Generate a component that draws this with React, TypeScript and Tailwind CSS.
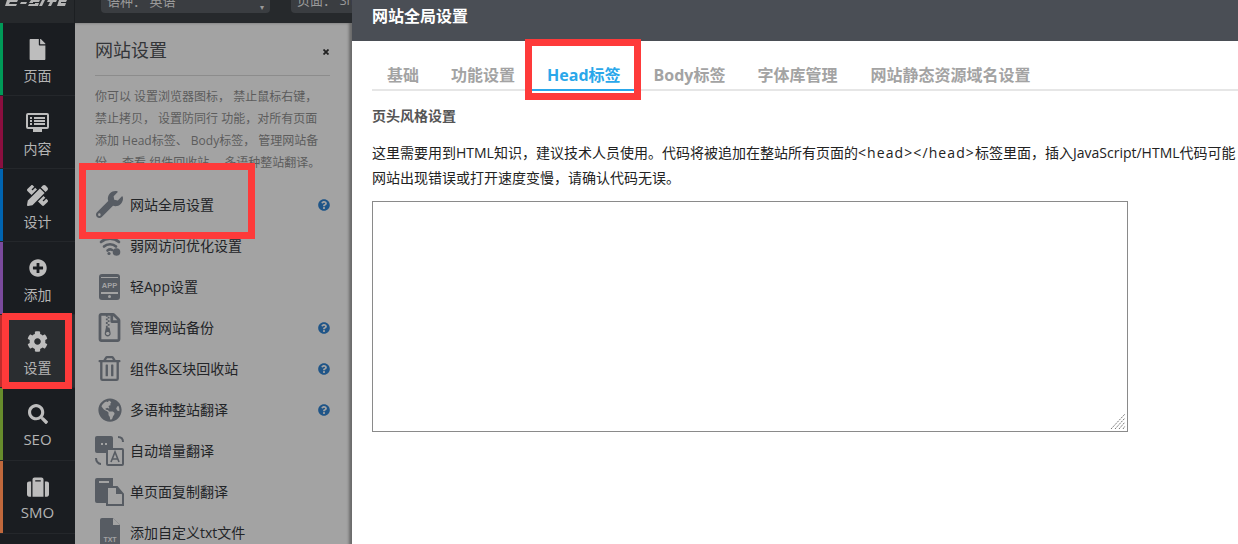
import React from 'react';
import { FaFile, FaPlusCircle, FaCog, FaSearch, FaSuitcase, FaWrench, FaQuestionCircle, FaRegTrashAlt, FaGlobeAmericas, FaRegFileArchive, FaPencilRuler } from 'react-icons/fa';

const cjk = { fontFamily: '"Open Sans", "Noto Sans CJK SC", "Noto Sans", sans-serif' };

const DesktopIcon = () => (
  <svg width="23" height="19" viewBox="0 0 23 19" fill="#bdbdbd">
    <path fillRule="evenodd" d="M2 0h19a2 2 0 0 1 2 2v12a2 2 0 0 1-2 2h-5v3H7v-3H2a2 2 0 0 1-2-2V2a2 2 0 0 1 2-2zm0 2v12h19V2H2z" />
    <path d="M4 4h2v2H4zM8 4h11v2H8zM4 7h2v2H4zM8 7h11v2H8zM4 10h2v2H4zM8 10h11v2H8z" />
  </svg>
);

const WifiIcon = () => (
  <svg width="22" height="20" viewBox="0 0 22 20" fill="none" stroke="#575c63" strokeWidth="2.6" strokeLinecap="round">
    <path d="M2 6c5-4.500 13-4.500 18 0M5 10.500c3-3 9-3 12 0M8.500 14.500c1.500-1.200 3.500-1.200 4.500-.5" />
    <circle cx="10" cy="17.500" r="1.600" fill="#575c63" stroke="none" />
    <circle cx="17.500" cy="16" r="3.800" fill="#575c63" stroke="none" />
  </svg>
);

const AppIcon = () => (
  <svg width="21" height="26" viewBox="0 0 21 26">
    <path d="M3 0h15a3 3 0 0 1 3 3v20a3 3 0 0 1-3 3H3a3 3 0 0 1-3-3V3a3 3 0 0 1 3-3z" fill="#575c63" />
    <rect x="2" y="3" width="17" height="1" fill="#a3a3a3" />
    <rect x="2" y="18" width="17" height="2" fill="#a3a3a3" />
    <circle cx="10.500" cy="22.500" r="1.500" fill="#a3a3a3" />
    <text x="10.500" y="14" fontSize="7.500" fontWeight="700" textAnchor="middle" fill="#a3a3a3" fontFamily="Liberation Sans">APP</text>
  </svg>
);

const TranslateIcon = () => (
  <svg width="29" height="30" viewBox="0 0 29 30">
    <path d="M2 0h14a2 2 0 0 1 2 2v13a2 2 0 0 1-2 2H2a2 2 0 0 1-2-2V2a2 2 0 0 1 2-2z" fill="#575c63" />
    <rect x="6" y="7" width="2" height="2" fill="#a3a3a3" />
    <rect x="10" y="7" width="2" height="2" fill="#a3a3a3" />
    <path d="M12 13h15a1 1 0 0 1 1 1v14a1 1 0 0 1-1 1H13a1 1 0 0 1-1-1z" fill="#a3a3a3" stroke="#575c63" strokeWidth="2" />
    <path d="M16 26l4-10 4 10M17.500 23h5" fill="none" stroke="#575c63" strokeWidth="1.600" />
    <path d="M23 1c3 0 5 2 5 5M1 22c0 3 2 6 5 6" fill="none" stroke="#575c63" strokeWidth="2" />
  </svg>
);

const CopyIcon = () => (
  <svg width="29" height="28" viewBox="0 0 29 28">
    <path d="M2 0h16v10h-6v15H2a2 2 0 0 1-2-2V2a2 2 0 0 1 2-2z" fill="#575c63" />
    <rect x="4" y="3" width="10" height="2" fill="#a3a3a3" />
    <path d="M12 9h10l6 7v11H12z" fill="#a3a3a3" stroke="#575c63" strokeWidth="2" />
    <path d="M21 9v7h7z" fill="#575c63" />
  </svg>
);

const TxtIcon = () => (
  <svg width="20" height="30" viewBox="0 0 20 30">
    <path d="M2 0h11l7 7v21a2 2 0 0 1-2 2H2a2 2 0 0 1-2-2V2a2 2 0 0 1 2-2z" fill="#575c63" />
    <path d="M13 0v7h7z" fill="#a3a3a3" />
    <text x="10" y="24" fontSize="7" fontWeight="700" textAnchor="middle" fill="#a3a3a3" fontFamily="Liberation Sans">TXT</text>
  </svg>
);

const railItems = [
  { label: '页面', stripe: 'bg-[#009a58]', icon: <FaFile size={21} color="#bdbdbd" /> },
  { label: '内容', stripe: 'bg-[#8a0f3f]', icon: <DesktopIcon /> },
  { label: '设计', stripe: 'bg-[#0064b0]', icon: <FaPencilRuler size={21} color="#bdbdbd" /> },
  { label: '添加', stripe: 'bg-[#7a4a9c]', icon: <FaPlusCircle size={18} color="#bdbdbd" /> },
  { label: '设置', stripe: 'bg-[#c02c2c]', icon: <FaCog size={21} color="#bdbdbd" />, active: true },
  { label: 'SEO', stripe: 'bg-[#678c2c]', icon: <FaSearch size={20} color="#bdbdbd" />, latin: true },
  { label: 'SMO', stripe: 'bg-[#c0683c]', icon: <FaSuitcase size={22} color="#bdbdbd" />, latin: true },
];

const menuItems = [
  { label: '网站全局设置', icon: <FaWrench size={27} color="#575c63" />, help: true },
  { label: '弱网访问优化设置', icon: <WifiIcon /> },
  { label: '轻App设置', icon: <AppIcon /> },
  { label: '管理网站备份', icon: <FaRegFileArchive size={29} color="#575c63" />, help: true },
  { label: '组件&区块回收站', icon: <FaRegTrashAlt size={25} color="#575c63" />, help: true },
  { label: '多语种整站翻译', icon: <FaGlobeAmericas size={24} color="#575c63" />, help: true },
  { label: '自动增量翻译', icon: <TranslateIcon /> },
  { label: '单页面复制翻译', icon: <CopyIcon /> },
  { label: '添加自定义txt文件', icon: <TxtIcon /> },
];

const tabs = [
  { label: '基础', cls: 'pl-[15px] pr-[16px]' },
  { label: '功能设置', cls: 'px-[16px]' },
  { label: 'Head标签', cls: 'ml-[1px] pl-[15px] pr-[16px] border-b-2 border-[#2aa7ea] !text-[#2aa7ea]' },
  { label: 'Body标签', cls: 'pl-[17px] pr-[16px]' },
  { label: '字体库管理', cls: 'px-[16px]' },
  { label: '网站静态资源域名设置', cls: 'pl-[17px] pr-[16px]' },
];

const RedBox = ({ className }: { className: string }) => (
  <div className={`absolute border-[7px] border-[#fe3a3a] z-20 ${className}`} />
);

export default function App() {
  return (
    <div className="relative flex h-[544px] w-[1238px] overflow-hidden bg-white" style={cjk}>
      {/* left rail */}
      <div className="flex w-[75px] shrink-0 flex-col bg-[#1a1d21]">
        <div className="flex h-[23px] shrink-0 items-start overflow-hidden border-r border-[#1c1f22] bg-[#26292c] pl-[5px]">
          <svg width="62" height="6" viewBox="0 0 62 6" fill="#b5b5b5">
            <path d="M2 0h11l-1 2H5L4 4h8l-1 2H0zM16 2h6l-1 2h-6zM26 0h9l-1 2h-6v1h6l-1 3h-10l1-2h6V3h-6zM37 0h3l-3 6h-3zM43 0h9l-1 2h-3l-2 4h-3l2-4h-3zM54 0h8l-1 2h-5v1h5l-1 3h-8z" />
          </svg>
        </div>
        {railItems.map((item) => (
          <div
            key={item.label}
            className={`flex h-[73px] shrink-0 border-b border-[#24272b] ${item.active ? 'bg-[#2a2d30]' : ''}`}
          >
            <div className={`w-[3px] ${item.stripe}`} />
            <div className="flex flex-1 flex-col items-center pr-[3px] pt-[14px]">
              <div className="flex h-[24px] items-center">{item.icon}</div>
              <span className={`mt-[5px] leading-[20px] text-[#b4b4b4] ${item.latin ? 'text-[15px] -translate-y-[2px]' : 'text-[14px]'}`}>{item.label}</span>
            </div>
          </div>
        ))}
      </div>

      {/* settings panel */}
      <div className="flex w-[277px] shrink-0 flex-col">
        <div className="flex h-[23px] shrink-0 items-start gap-[21px] overflow-hidden bg-[#26292c] pl-[26px]">
          <div className="flex h-[13px] w-[169px] shrink-0 items-center justify-between overflow-hidden rounded-b-[4px] bg-[#3a3d41] px-[6px] text-[13px] text-[#9a9a9a]">
            <span className="-mt-[9px] whitespace-nowrap">语种： 英语</span>
            <span className="text-[8px]">▾</span>
          </div>
          <div className="h-[13px] flex-1 overflow-hidden whitespace-nowrap rounded-bl-[4px] bg-[#3a3d41] pl-[6px] text-[13px] leading-[13px] text-[#9a9a9a]">
            <span className="relative -top-[6px]">页面： Shop</span>
          </div>
        </div>
        <div className="flex flex-1 flex-col bg-[#a3a3a3] pl-[20px] pr-[22px] shadow-[inset_-3px_0_3px_rgba(0,0,0,0.35)]">
          <div className="flex h-[53px] shrink-0 items-center justify-between border-b border-[#8c8c8c]">
            <span className="mt-[3px] text-[18px] text-[#333538]">网站设置</span>
            <svg className="mr-px mt-[6px]" width="6" height="6" viewBox="0 0 6 6" stroke="#222" strokeWidth="1.800">
              <path d="M0.500 0.500l5 5M5.500 0.500l-5 5" />
            </svg>
          </div>
          <p className="mt-[10px] shrink-0 whitespace-nowrap text-[12px] leading-[22px] text-[#5c5c5c]">
            你可以 设置浏览器图标， 禁止鼠标右键，
            <br />
            禁止拷贝， 设置防同行 功能，对所有页面
            <br />
            添加 Head标签、 Body标签， 管理网站备
            <br />
            份， 查看 组件回收站， 多语种整站翻译。
          </p>
          <div className="mt-[10px] flex flex-col">
            {menuItems.map((item) => (
              <div key={item.label} className="flex h-[41px] shrink-0 items-center">
                <div className="flex h-[30px] w-[35px] shrink-0 items-center justify-center pr-[6px]">{item.icon}</div>
                <span className="flex-1 text-[14px] text-[#222427]">{item.label}</span>
                {item.help && <FaQuestionCircle size={12} color="#1f5588" />}
              </div>
            ))}
          </div>
        </div>
      </div>

      {/* modal */}
      <div className="relative z-10 flex min-w-0 flex-1 flex-col bg-white">
        <div className="flex h-[41px] shrink-0 items-center bg-[#4a4e55] pb-[9px] pl-[20px]">
          <span className="text-[16px] font-bold text-white">网站全局设置</span>
        </div>
        <div className="ml-[20px] mt-[21px] flex h-[29px] w-[866px] shrink-0 items-start border-b-2 border-[#e6e6e6]">
          {tabs.map((tab) => (
            <div
              key={tab.label}
              className={`h-[29px] whitespace-nowrap text-[16px] font-bold leading-[26px] text-[#a3a3a3] ${tab.cls}`}
            >
              {tab.label}
            </div>
          ))}
        </div>
        <div className="ml-[20px] mt-[14px] text-[14px] font-bold leading-[22px] text-[#555]">页头风格设置</div>
        <p className="ml-[20px] mt-[13px] w-[866px] whitespace-nowrap text-[14px] leading-[25px] text-[#222]">
          这里需要用到HTML知识，建议技术人员使用。代码将被追加在整站所有页面的
          <span className="tracking-[1.1px]">&lt;head&gt;&lt;/head&gt;</span>
          标签里面，插入JavaScript/HTML代码可能
          <br />
          网站出现错误或打开速度变慢，请确认代码无误。
        </p>
        <div className="relative ml-[20px] mt-[11px] h-[231px] w-[756px]">
          <textarea className="h-full w-full resize-none border border-[#8a8a8a] bg-white" />
          <svg className="absolute bottom-[2px] right-[2px]" width="16" height="17" viewBox="0 0 16 17" stroke="#777" strokeWidth="1" strokeDasharray="2 1">
            <path d="M1 16L15 1M5 16L15 5M9 16l6-7M13 16l2-3" />
          </svg>
        </div>
      </div>

      <RedBox className="left-[79px] top-[163px] h-[76px] w-[176px]" />
      <RedBox className="left-[2px] top-[313px] h-[76px] w-[70px]" />
      <RedBox className="left-[525px] top-[39px] h-[61px] w-[116px]" />
    </div>
  );
}
